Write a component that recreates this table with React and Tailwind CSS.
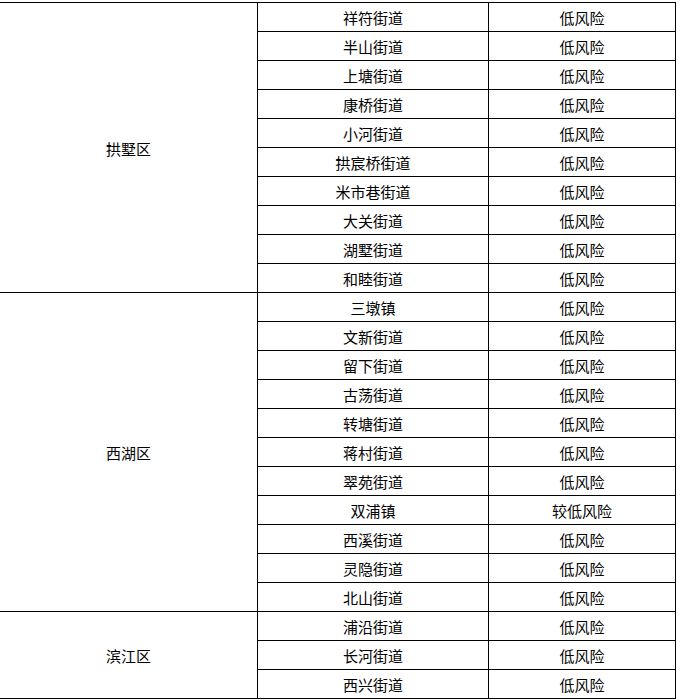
const groups = [
  {
    name: "拱墅区",
    rows: [
      ["祥符街道", "低风险"],
      ["半山街道", "低风险"],
      ["上塘街道", "低风险"],
      ["康桥街道", "低风险"],
      ["小河街道", "低风险"],
      ["拱宸桥街道", "低风险"],
      ["米市巷街道", "低风险"],
      ["大关街道", "低风险"],
      ["湖墅街道", "低风险"],
      ["和睦街道", "低风险"],
    ],
  },
  {
    name: "西湖区",
    rows: [
      ["三墩镇", "低风险"],
      ["文新街道", "低风险"],
      ["留下街道", "低风险"],
      ["古荡街道", "低风险"],
      ["转塘街道", "低风险"],
      ["蒋村街道", "低风险"],
      ["翠苑街道", "低风险"],
      ["双浦镇", "较低风险"],
      ["西溪街道", "低风险"],
      ["灵隐街道", "低风险"],
      ["北山街道", "低风险"],
    ],
  },
  {
    name: "滨江区",
    rows: [
      ["浦沿街道", "低风险"],
      ["长河街道", "低风险"],
      ["西兴街道", "低风险"],
    ],
  },
];

export default function App() {
  return (
    <div
      className="min-h-[700px] bg-white text-black text-[15px] leading-none"
      style={{ fontFamily: '"Noto Sans CJK SC", "Noto Sans", sans-serif' }}
    >
      <div className="mt-[2px] w-[676px] border-t border-black">
        {groups.map((g) => (
          <div key={g.name} className="flex">
            <div className="w-[258px] border-r border-b border-black flex items-center justify-center pt-px">
              {g.name}
            </div>
            <div className="flex flex-col">
              {g.rows.map(([a, b]) => (
                <div key={a} className="flex h-[29px] border-b border-black">
                  <div className="w-[231px] border-r border-black flex items-center justify-center pt-px">
                    {a}
                  </div>
                  <div className="w-[187px] border-r border-black flex items-center justify-center pt-px">
                    {b}
                  </div>
                </div>
              ))}
            </div>
          </div>
        ))}
      </div>
    </div>
  );
}
